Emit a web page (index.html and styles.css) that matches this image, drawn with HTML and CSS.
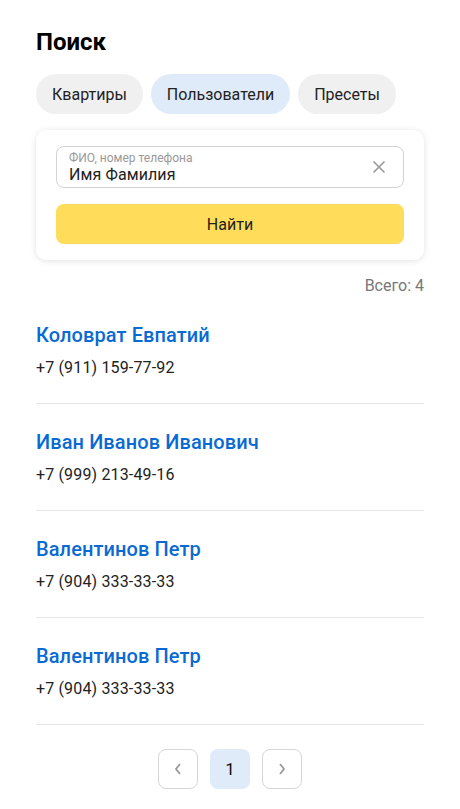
FILE: index.html
```html
<!DOCTYPE html>
<html lang="ru">
<head>
<meta charset="utf-8">
<link rel="stylesheet" href="styles.css">
</head>
<body>
<main class="page">
  <h1 class="title">Поиск</h1>
  <nav class="tabs">
    <button class="tab">Квартиры</button>
    <button class="tab tab-active">Пользователи</button>
    <button class="tab">Пресеты</button>
  </nav>
  <section class="card">
    <div class="field">
      <div class="field-text">
        <span class="field-label">ФИО, номер телефона</span>
        <span class="field-value">Имя Фамилия</span>
      </div>
      <svg class="clear" width="14" height="14" viewBox="0 0 14 14"><path d="M1.5 1.5 L12.5 12.5 M12.5 1.5 L1.5 12.5" stroke="#999" stroke-width="1.6" fill="none"/></svg>
    </div>
    <button class="submit">Найти</button>
  </section>
  <div class="total">Всего: 4</div>
  <ul class="list">
    <li class="item"><a class="name">Коловрат Евпатий</a><span class="phone">+7 (911) 159-77-92</span></li>
    <li class="item"><a class="name">Иван Иванов Иванович</a><span class="phone">+7 (999) 213-49-16</span></li>
    <li class="item"><a class="name">Валентинов Петр</a><span class="phone">+7 (904) 333-33-33</span></li>
    <li class="item"><a class="name">Валентинов Петр</a><span class="phone">+7 (904) 333-33-33</span></li>
  </ul>
  <div class="pager">
    <button class="pg pg-nav"><svg width="10" height="14" viewBox="0 0 10 14"><path d="M7 2 L3 7 L7 12" stroke="#999" stroke-width="1.8" fill="none"/></svg></button>
    <button class="pg pg-current">1</button>
    <button class="pg pg-nav"><svg width="10" height="14" viewBox="0 0 10 14"><path d="M3 2 L7 7 L3 12" stroke="#999" stroke-width="1.8" fill="none"/></svg></button>
  </div>
</main>
</body>
</html>
```
FILE: styles.css
```css
* { box-sizing: border-box; }
html, body { margin: 0; padding: 0; background: #fff; }
body { font-family: Roboto, "Liberation Sans", sans-serif; color: #000; }
.page { padding: 28px 36px 20px; }
.title { margin: 0; font-size: 24px; line-height: 28px; font-weight: 700; }
.tabs { display: flex; gap: 8px; margin-top: 18px; }
.tab {
  height: 40px; padding: 0 16px; border: none; border-radius: 20px;
  background: #f0f0f0; font: inherit; font-size: 16px; color: #222;
}
.tab-active { background: #dfebf9; }
.card {
  margin-top: 16px; padding: 16px 20px; border-radius: 10px;
  background: #fff; box-shadow: 0 1px 6px rgba(0,0,0,0.12);
  display: flex; flex-direction: column; gap: 16px;
}
.field {
  height: 42px; border: 1px solid #d3d3d3; border-radius: 8px;
  display: flex; align-items: center; padding: 0 17px 0 12px;
}
.field-text { flex: 1; display: flex; flex-direction: column; padding-top: 1px; }
.field-label { font-size: 12px; line-height: 14px; color: #999; }
.field-value { font-size: 16px; line-height: 19px; color: #222; letter-spacing: 0.1px; }
.submit {
  height: 40px; border: none; border-radius: 8px; background: #ffdc5a;
  font: inherit; font-size: 16px; color: #222;
}
.total { margin-top: 16px; text-align: right; font-size: 16px; line-height: 20px; color: #777; }
.list { list-style: none; margin: 1px 0 0; padding: 0; }
.item {
  display: flex; flex-direction: column; gap: 11px;
  padding: 26px 0 25px; border-bottom: 1px solid #e6e6e6;
}
.name { font-size: 20px; line-height: 24px; font-weight: 500; color: #0a6ad4; letter-spacing: 0.1px; }
.phone { font-size: 16px; line-height: 20px; color: #222; letter-spacing: 0.15px; }
.pager { display: flex; justify-content: center; gap: 12px; margin-top: 24px; }
.pg {
  width: 40px; height: 40px; border-radius: 8px; font: inherit; font-size: 17px;
  display: flex; align-items: center; justify-content: center; padding: 0;
}
.pg-nav { background: #fff; border: 1px solid #d6d6d6; }
.pg-current { background: #dfebf9; border: none; color: #111; }
```
